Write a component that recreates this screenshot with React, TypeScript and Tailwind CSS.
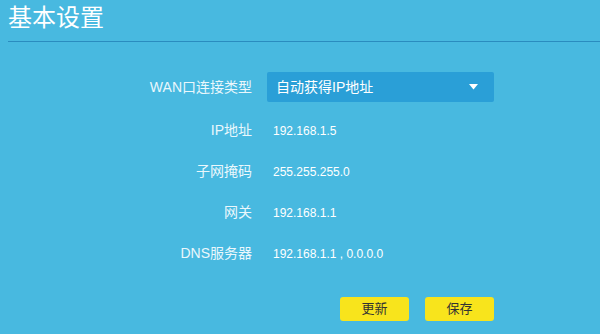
import React from "react";

const font = { fontFamily: '"Liberation Sans", "Noto Sans CJK SC", sans-serif' };

function Row({ label, value }: { label: string; value: string }) {
  return (
    <div className="flex h-[41px] items-center">
      <div className="w-[252px] text-right text-[14px] text-[#eaf7fc]">{label}</div>
      <div className="ml-[21px] text-[12px] text-white">{value}</div>
    </div>
  );
}

export default function App() {
  return (
    <div className="w-[600px] h-[334px] bg-[#48b9e0] overflow-hidden" style={font}>
      <div className="pl-[8px] pt-[2px] h-[41px] text-[24px] leading-[32px] text-white">基本设置</div>
      <div className="ml-[8px] h-px bg-[#2a8cbf]" />
      <div className="mt-[30px] flex h-[30px] items-center">
        <div className="w-[252px] text-right text-[14px] text-[#eaf7fc]">WAN口连接类型</div>
        <div className="ml-[15px] flex h-[30px] w-[227px] items-center justify-between rounded-[2px] bg-[#2a9fd7] pl-[9px] pr-[16px] text-[14px] text-white">
          <span>自动获得IP地址</span>
          <svg width="9" height="6" viewBox="0 0 9 6">
            <path d="M0 0 H9 L4.5 5.5 Z" fill="#ffffff" />
          </svg>
        </div>
      </div>
      <div className="mt-[8px]">
        <Row label="IP地址" value="192.168.1.5" />
        <Row label="子网掩码" value="255.255.255.0" />
        <Row label="网关" value="192.168.1.1" />
        <Row label="DNS服务器" value="192.168.1.1 , 0.0.0.0" />
      </div>
      <div className="mt-[23px] flex">
        <div className="w-[267px]" />
        <div className="flex w-[227px] justify-end gap-[16px]">
          <button className="h-[24px] w-[69px] rounded-[3px] bg-[#f8e41c] text-[13px] text-[#333]">更新</button>
          <button className="h-[24px] w-[69px] rounded-[3px] bg-[#f8e41c] text-[13px] text-[#333]">保存</button>
        </div>
      </div>
    </div>
  );
}
